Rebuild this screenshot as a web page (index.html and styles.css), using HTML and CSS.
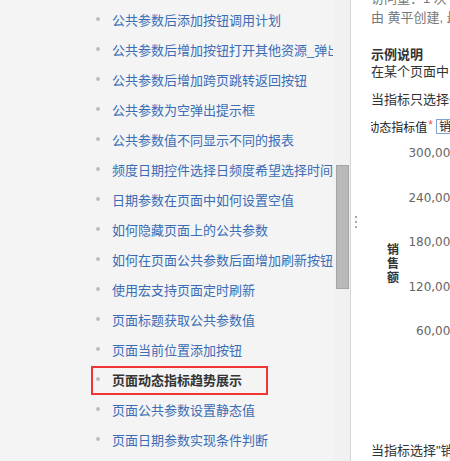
FILE: index.html
```html
<!DOCTYPE html>
<html lang="zh-CN">
<head>
    <meta charset="UTF-8">
    <meta name="viewport" content="width=device-width, initial-scale=1.0">
    <title>页面动态指标趋势展示</title>
    <link rel="stylesheet" href="styles.css">
</head>
<body>
    <div class="layout">
        <aside class="sidebar">
            <ul class="page-tree">
                <li><a href="#">公共参数后添加按钮调用计划</a></li>
                <li><a href="#">公共参数后增加按钮打开其他资源_弹出框</a></li>
                <li><a href="#">公共参数后增加跨页跳转返回按钮</a></li>
                <li><a href="#">公共参数为空弹出提示框</a></li>
                <li><a href="#">公共参数值不同显示不同的报表</a></li>
                <li><a href="#">频度日期控件选择日频度希望选择时间段</a></li>
                <li><a href="#">日期参数在页面中如何设置空值</a></li>
                <li><a href="#">如何隐藏页面上的公共参数</a></li>
                <li><a href="#">如何在页面公共参数后面增加刷新按钮</a></li>
                <li><a href="#">使用宏支持页面定时刷新</a></li>
                <li><a href="#">页面标题获取公共参数值</a></li>
                <li><a href="#">页面当前位置添加按钮</a></li>
                <li class="current marked"><span>页面动态指标趋势展示</span></li>
                <li><a href="#">页面公共参数设置静态值</a></li>
                <li><a href="#">页面日期参数实现条件判断</a></li>
            </ul>
        </aside>

        <div class="scrollbar"><div class="scroll-thumb"></div></div>

        <div class="splitter">
            <span class="grip"></span>
            <span class="grip"></span>
            <span class="grip"></span>
        </div>

        <main class="content">
            <div class="page-meta">
                访问量：1 次<br>
                由 黄平创建, 最后修改于 2018-07-18
            </div>

            <h4>示例说明</h4>
            <p>在某个页面中，根据参数选择的指标动态展示趋势</p>
            <p class="spaced">当指标只选择一个时，展示该指标的趋势图</p>

            <div class="param-row">
                <label class="param-label"><span>动态指标值</span><em>*</em></label>
                <span class="param-input">销售额</span>
            </div>

            <div class="chart">
                <div class="axis-title">销售额</div>
                <div class="axis-ticks">
                    <div class="tick">300,000</div>
                    <div class="tick">240,000</div>
                    <div class="tick">180,000</div>
                    <div class="tick">120,000</div>
                    <div class="tick">60,000</div>
                    <div class="tick">0</div>
                </div>
            </div>

            <p class="after-chart">当指标选择"销售额"和"利润"时，展示多指标趋势</p>
        </main>
    </div>
</body>
</html>
```

FILE: styles.css
```css
:root {
    --sidebar-bg: #f4f4f4;
    --link-color: #3a6db5;
    --text-color: #333;
    --muted-color: #777;
    --mark-color: #f03535;
}

html, body {
    margin: 0;
    padding: 0;
    height: 461px;
    overflow: hidden;
    background: #fff;
}

body {
    font-family: "Liberation Sans", "Noto Sans CJK SC", sans-serif;
    font-size: 13px;
    color: var(--text-color);
}

.layout {
    display: flex;
    height: 461px;
}

/* page tree on the left */
.sidebar {
    flex: none;
    width: 333px;
    overflow: hidden;
    background: var(--sidebar-bg);
}

.page-tree {
    list-style: none;
    margin: 0;
    padding: 4px 0 0 91px;
}

.page-tree li {
    position: relative;
    display: flex;
    align-items: center;
    height: 30px;
    padding-left: 21px;
    white-space: nowrap;
}

.page-tree li::before {
    content: "";
    position: absolute;
    left: 5px;
    top: 13px;
    width: 4px;
    height: 4px;
    border-radius: 50%;
    background: #bdbdbd;
}

.page-tree a {
    color: var(--link-color);
    text-decoration: none;
}

.page-tree .current {
    font-weight: bold;
    color: var(--text-color);
}

/* annotation box drawn over the current item */
.page-tree .marked::after {
    content: "";
    position: absolute;
    left: 0;
    top: 2px;
    width: 177px;
    height: 29px;
    border: 2.5px solid var(--mark-color);
    box-sizing: border-box;
}

.scrollbar {
    flex: none;
    width: 17px;
    background: #f1f1f1;
    padding-top: 165px;
    box-sizing: border-box;
}

.scroll-thumb {
    width: 13px;
    height: 124px;
    margin-left: 3px;
    background: #b9b9b9;
    border: 1px solid #a4a4a4;
    box-sizing: border-box;
}

.splitter {
    flex: none;
    width: 10px;
    border-left: 1px solid #d6d6d6;
    box-sizing: border-box;
    display: flex;
    flex-direction: column;
    gap: 3px;
    padding: 216px 0 0 4px;
    background: #fff;
}

.grip {
    width: 2px;
    height: 2px;
    background: #a8a8a8;
}

/* page body */
.content {
    flex: 1;
    overflow: hidden;
    padding-left: 11px;
    white-space: nowrap;
}

.page-meta {
    margin-top: -11px;
    line-height: 19px;
    color: var(--muted-color);
}

.content h4 {
    margin: 19px 0 0;
    font-size: 13px;
    line-height: 17px;
    font-weight: bold;
    color: var(--text-color);
}

.content p {
    margin: 0;
    line-height: 18px;
}

.content p.spaced {
    margin-top: 10px;
}

.param-row {
    display: flex;
    align-items: center;
    height: 16px;
    margin-top: 9px;
    font-size: 12px;
}

.param-label {
    display: flex;
    justify-content: flex-end;
    width: 62px;
    overflow: hidden;
    flex: none;
    color: #222;
}

.param-label em {
    font-style: normal;
    color: #e25555;
    padding-left: 1px;
}

.param-input {
    flex: none;
    height: 15px;
    line-height: 14px;
    margin-left: 3px;
    padding: 0 2px;
    border: 1px solid #7ea3d3;
    box-sizing: border-box;
    color: #222;
}

.chart {
    display: flex;
    margin-top: 12px;
    padding-left: 16px;
}

.axis-title {
    flex: none;
    width: 12px;
    margin-top: 97px;
    font-size: 12px;
    line-height: 14px;
    font-weight: bold;
    white-space: normal;
    color: #333;
}

.axis-ticks {
    flex: none;
    width: 59px;
    text-align: right;
    font-family: "DejaVu Sans", sans-serif;
    font-size: 12px;
    color: #666;
}

.tick {
    height: 44.5px;
    line-height: 14px;
}

.content p.after-chart {
    margin-top: 29px;
}
```
